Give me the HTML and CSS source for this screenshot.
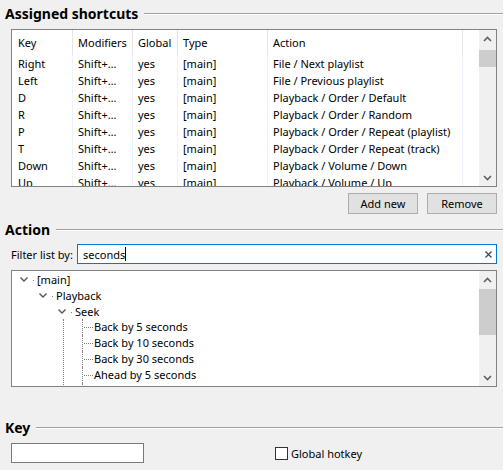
FILE: index.html
```html
<!DOCTYPE html>
<html lang="en">
<head>
    <meta charset="UTF-8">
    <title>Keyboard shortcuts</title>
    <link rel="stylesheet" href="styles.css">
</head>
<body>
    <div class="page">
        <div class="heading heading-first"><span>Assigned shortcuts</span><i class="rule"></i></div>

        <div class="listbox">
            <div class="grid">
                <div class="row head">
                    <div class="cell">Key</div>
                    <div class="cell">Modifiers</div>
                    <div class="cell">Global</div>
                    <div class="cell">Type</div>
                    <div class="cell">Action</div>
                </div>
                <div class="row"><div class="cell">Right</div><div class="cell">Shift+…</div><div class="cell">yes</div><div class="cell">[main]</div><div class="cell">File / Next playlist</div></div>
                <div class="row"><div class="cell">Left</div><div class="cell">Shift+…</div><div class="cell">yes</div><div class="cell">[main]</div><div class="cell">File / Previous playlist</div></div>
                <div class="row"><div class="cell">D</div><div class="cell">Shift+…</div><div class="cell">yes</div><div class="cell">[main]</div><div class="cell">Playback / Order / Default</div></div>
                <div class="row"><div class="cell">R</div><div class="cell">Shift+…</div><div class="cell">yes</div><div class="cell">[main]</div><div class="cell">Playback / Order / Random</div></div>
                <div class="row"><div class="cell">P</div><div class="cell">Shift+…</div><div class="cell">yes</div><div class="cell">[main]</div><div class="cell">Playback / Order / Repeat (playlist)</div></div>
                <div class="row"><div class="cell">T</div><div class="cell">Shift+…</div><div class="cell">yes</div><div class="cell">[main]</div><div class="cell">Playback / Order / Repeat (track)</div></div>
                <div class="row"><div class="cell">Down</div><div class="cell">Shift+…</div><div class="cell">yes</div><div class="cell">[main]</div><div class="cell">Playback / Volume / Down</div></div>
                <div class="row"><div class="cell">Up</div><div class="cell">Shift+…</div><div class="cell">yes</div><div class="cell">[main]</div><div class="cell">Playback / Volume / Up</div></div>
            </div>
            <div class="scrollbar">
                <div class="arrow"><svg width="9" height="6" viewBox="0 0 9 6"><path d="M1 5 L4.5 1.5 L8 5" fill="none" stroke="#606060" stroke-width="1.6"/></svg></div>
                <div class="thumb thumb-list"></div>
                <div class="track"></div>
                <div class="arrow"><svg width="9" height="6" viewBox="0 0 9 6"><path d="M1 1 L4.5 4.5 L8 1" fill="none" stroke="#606060" stroke-width="1.6"/></svg></div>
            </div>
        </div>

        <div class="actions">
            <button class="btn">Add new</button>
            <button class="btn">Remove</button>
        </div>

        <div class="heading"><span>Action</span><i class="rule"></i></div>

        <div class="filter">
            <label class="filter-label">Filter list by:</label>
            <div class="search">
                <span class="search-text">seconds</span><span class="caret"></span>
                <svg class="clear" width="7" height="7" viewBox="0 0 7 7"><path d="M0.5 0.5 L6.5 6.5 M6.5 0.5 L0.5 6.5" stroke="#3a4a5a" stroke-width="1.3"/></svg>
            </div>
        </div>

        <div class="treebox">
            <div class="tree">
                <div class="node lvl0"><svg class="exp" width="8" height="5" viewBox="0 0 8 5"><path d="M0.5 0.5 L4 4 L7.5 0.5" fill="none" stroke="#555" stroke-width="1.4"/></svg><i class="dot"></i>[main]</div>
                <div class="node lvl1"><svg class="exp" width="8" height="5" viewBox="0 0 8 5"><path d="M0.5 0.5 L4 4 L7.5 0.5" fill="none" stroke="#555" stroke-width="1.4"/></svg><i class="dot"></i>Playback</div>
                <div class="node lvl2"><svg class="exp" width="8" height="5" viewBox="0 0 8 5"><path d="M0.5 0.5 L4 4 L7.5 0.5" fill="none" stroke="#555" stroke-width="1.4"/></svg><i class="dot"></i>Seek</div>
                <div class="leaves">
                    <div class="leaf">Back by 5 seconds</div>
                    <div class="leaf">Back by 10 seconds</div>
                    <div class="leaf">Back by 30 seconds</div>
                    <div class="leaf">Ahead by 5 seconds</div>
                    <div class="leaf"></div>
                </div>
            </div>
            <div class="scrollbar">
                <div class="arrow"><svg width="9" height="6" viewBox="0 0 9 6"><path d="M1 5 L4.5 1.5 L8 5" fill="none" stroke="#606060" stroke-width="1.6"/></svg></div>
                <div class="thumb thumb-tree"></div>
                <div class="track"></div>
                <div class="arrow"><svg width="9" height="6" viewBox="0 0 9 6"><path d="M1 1 L4.5 4.5 L8 1" fill="none" stroke="#606060" stroke-width="1.6"/></svg></div>
            </div>
        </div>

        <div class="heading heading-key"><span>Key</span><i class="rule"></i></div>

        <div class="keyrow">
            <div class="keyinput"></div>
            <label class="check"><span class="box"></span>Global hotkey</label>
        </div>
    </div>
</body>
</html>
```

FILE: styles.css
```css
body {
    margin: 0;
    background: #f0f0f0;
    font-family: "Noto Sans", "Open Sans", sans-serif;
    font-size: 11px;
    color: #000;
}

.page {
    width: 486px;
    padding: 4px 6px 0 11px;
}

/* group headings with etched rule */
.heading {
    display: flex;
    align-items: center;
    height: 18px;
    margin-left: -6px;
    margin-right: -6px;
    font-size: 14px;
    font-weight: bold;
    margin-top: 6px;
}

.heading-first {
    margin-top: 0;
}

.heading-key {
    margin-top: 31px;
}

.rule {
    flex: 1;
    margin-left: 6px;
    margin-top: 2px;
    border-top: 1px solid #a0a0a0;
    border-bottom: 1px solid #fff;
}

/* shortcuts list */
.listbox {
    display: flex;
    height: 156px;
    margin-top: 7px;
    border: 1px solid #828282;
    background: #fff;
    overflow: hidden;
}

.grid {
    width: 467px;
}

.row {
    display: grid;
    grid-template-columns: 61px 60px 45px 90px 195px;
    height: 17px;
    line-height: 17px;
}

.row.head {
    height: 25px;
    line-height: 25px;
}

.cell {
    padding-left: 5px;
    border-right: 1px solid #eef2fa;
    white-space: nowrap;
    overflow: hidden;
}

.cell:first-child {
    padding-left: 6px;
}

.head .cell {
    border-right-color: #e5e5e5;
}

.scrollbar {
    display: flex;
    flex-direction: column;
    width: 17px;
    margin-left: auto;
    background: #f0f0f0;
}

.arrow {
    height: 17px;
    display: flex;
    align-items: center;
    justify-content: center;
}

.thumb {
    background: #cdcdcd;
    margin-top: 3px;
}

.thumb-list {
    height: 17px;
}

.thumb-tree {
    height: 46px;
    margin-top: 1px;
}

.track {
    flex: 1;
}

/* buttons */
.actions {
    display: flex;
    justify-content: flex-end;
    gap: 9px;
    margin-top: 6px;
}

.btn {
    width: 70px;
    height: 21px;
    padding: 0;
    font-family: inherit;
    font-size: 11px;
    color: #000;
    background: #e1e1e1;
    border: 1px solid #adadad;
}

/* filter */
.filter {
    display: flex;
    align-items: center;
    margin-top: 6px;
}

.filter-label {
    width: 66px;
    white-space: nowrap;
}

.search {
    flex: 1;
    display: flex;
    align-items: center;
    height: 18px;
    padding-left: 5px;
    border: 1px solid #0078d7;
    background: #fff;
}

.caret {
    width: 1px;
    height: 14px;
    background: #000;
}

.clear {
    margin-left: auto;
    margin-right: 4px;
}

/* action tree */
.treebox {
    display: flex;
    height: 115px;
    margin-top: 6px;
    border: 1px solid #828282;
    background: #fff;
    overflow: hidden;
}

.tree {
    flex: 1;
}

.node {
    display: flex;
    align-items: center;
    height: 16px;
}

.lvl0 { padding-left: 8px; }
.lvl1 { padding-left: 27px; }
.lvl2 { padding-left: 46px; }

.exp {
    margin-right: 5px;
}

.dot {
    width: 1px;
    height: 1px;
    margin-top: 2px;
    margin-right: 3px;
    background: #808080;
}

.leaves {
    margin-left: 51px;
    border-left: 1px dotted #808080;
}

.leaf {
    position: relative;
    height: 16px;
    line-height: 16px;
    margin-left: 18px;
    padding-left: 11px;
    border-left: 1px dotted #808080;
}

.leaf::before {
    content: "";
    position: absolute;
    left: 1px;
    top: 8px;
    width: 9px;
    border-top: 1px dotted #808080;
}

.leaf:empty::before {
    display: none;
}

/* key */
.keyrow {
    display: flex;
    align-items: center;
    margin-top: 7px;
}

.keyinput {
    width: 131px;
    height: 18px;
    border: 1px solid #7a7a7a;
    background: #fff;
}

.check {
    display: flex;
    align-items: center;
    margin-left: 131px;
}

.box {
    width: 11px;
    height: 11px;
    margin-right: 3px;
    border: 1px solid #333;
    background: #fff;
}
```
